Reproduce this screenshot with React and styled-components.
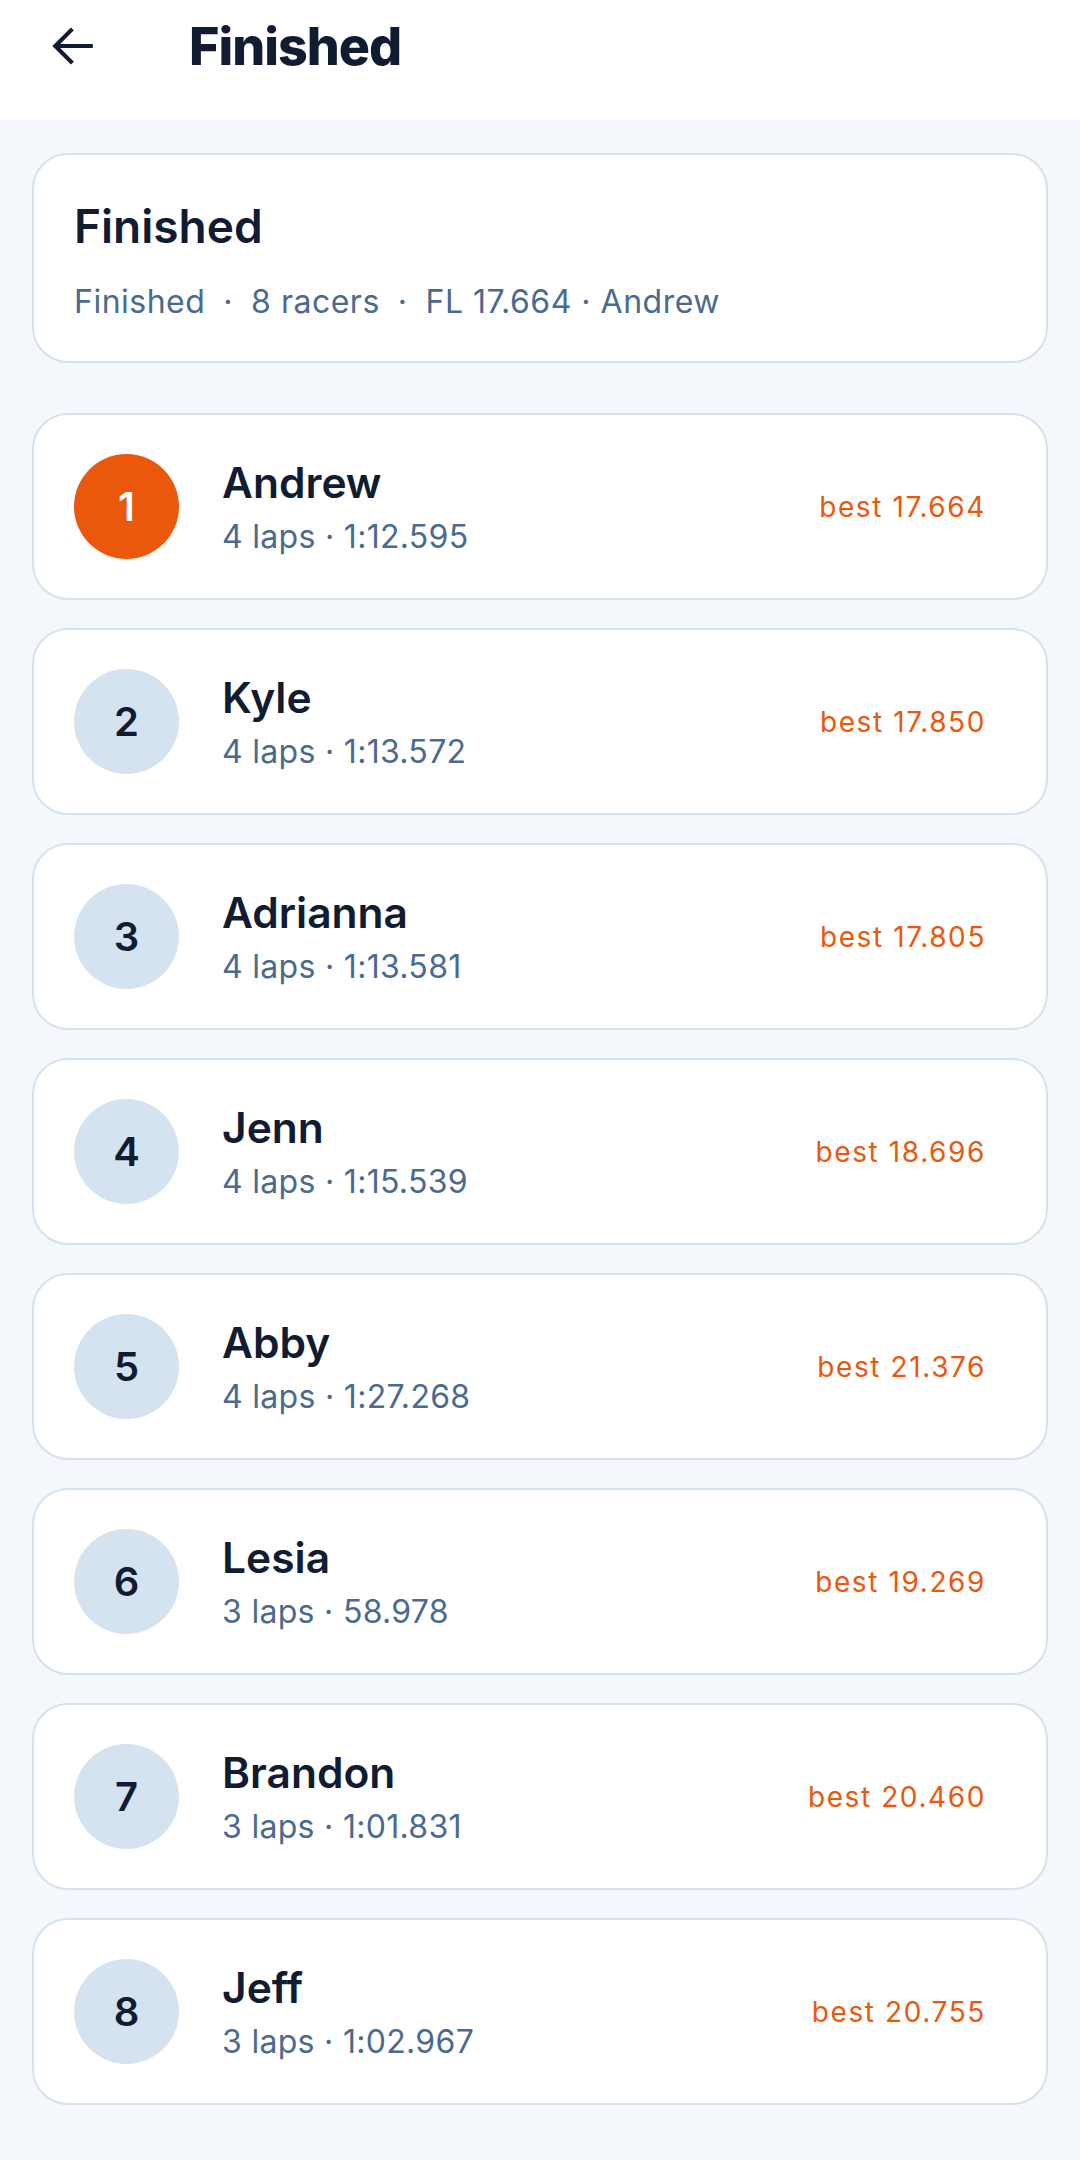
import React from "react";
import styled, { createGlobalStyle } from "styled-components";

const Global = createGlobalStyle`
  html, body { margin: 0; padding: 0; }
  body {
    background: #f4f7fc;
    font-family: Inter, "Noto Sans", "Liberation Sans", sans-serif;
    -webkit-font-smoothing: antialiased;
  }
  * { box-sizing: border-box; }
`;

const Page = styled.div`
  min-height: 2160px;
  background: #f4f7fc;
  display: flex;
  flex-direction: column;
`;

const Header = styled.header`
  height: 120px;
  background: #ffffff;
  display: flex;
  align-items: flex-start;
  padding: 10px 0 0 48px;
`;

const HeaderRow = styled.div`
  height: 72px;
  display: flex;
  align-items: center;
  gap: 91px;
`;

const BackButton = styled.button`
  width: 50px;
  height: 50px;
  padding: 0;
  border: none;
  background: transparent;
  display: flex;
  align-items: center;
  justify-content: center;
  color: #111c33;
  cursor: pointer;
`;

const HeaderTitle = styled.h1`
  margin: 0;
  font-size: 52px;
  font-weight: 800;
  letter-spacing: -1px;
  color: #111c33;
`;

const Content = styled.main`
  display: flex;
  flex-direction: column;
  padding: 33px 32px 0 32px;
`;

const Card = styled.section`
  background: #ffffff;
  border: 2px solid #d5e2ef;
  border-radius: 36px;
`;

const SummaryCard = styled(Card)`
  height: 210px;
  padding: 5px 40px 0;
  display: flex;
  flex-direction: column;
  justify-content: center;
  gap: 29px;
  margin-bottom: 50px;
`;

const SummaryTitle = styled.h2`
  margin: 0;
  font-size: 46px;
  font-weight: 600;
  color: #111c33;
  line-height: 1.2;
`;

const SummaryMeta = styled.div`
  display: flex;
  align-items: center;
  font-size: 32px;
  line-height: 1.2;
  color: #4a6a90;
  letter-spacing: 0.5px;
`;

const Sep = styled.span`
  margin: 0 18px;
`;

const List = styled.div`
  display: flex;
  flex-direction: column;
  gap: 28px;
`;

const RacerCard = styled(Card)`
  height: 187px;
  display: flex;
  align-items: center;
  padding: 0 60px 0 40px;
`;

const Position = styled.div`
  width: 105px;
  height: 105px;
  border-radius: 50%;
  flex-shrink: 0;
  display: flex;
  align-items: center;
  justify-content: center;
  font-size: 40px;
  font-weight: 600;
  background: ${(p) => (p.$leader ? "#ea580c" : "#d5e2ef")};
  color: ${(p) => (p.$leader ? "#ffffff" : "#111c33")};
`;

const Info = styled.div`
  flex: 1;
  display: flex;
  flex-direction: column;
  gap: 8px;
  margin-left: 43px;
  padding-top: 2px;
`;

const Name = styled.div`
  font-size: 42.5px;
  font-weight: 600;
  color: #111c33;
  line-height: 1.2;
`;

const Laps = styled.div`
  font-size: 32px;
  color: #4a6a90;
  line-height: 1.3;
  letter-spacing: 0.3px;
`;

const Best = styled.div`
  font-size: 28px;
  color: #ea580c;
  letter-spacing: 1.6px;
`;

const racers = [
  { name: "Andrew", laps: 4, time: "1:12.595", best: "17.664" },
  { name: "Kyle", laps: 4, time: "1:13.572", best: "17.850" },
  { name: "Adrianna", laps: 4, time: "1:13.581", best: "17.805" },
  { name: "Jenn", laps: 4, time: "1:15.539", best: "18.696" },
  { name: "Abby", laps: 4, time: "1:27.268", best: "21.376" },
  { name: "Lesia", laps: 3, time: "58.978", best: "19.269" },
  { name: "Brandon", laps: 3, time: "1:01.831", best: "20.460" },
  { name: "Jeff", laps: 3, time: "1:02.967", best: "20.755" },
];

export default function App() {
  return (
    <Page>
      <Global />
      <Header>
        <HeaderRow>
          <BackButton aria-label="Back">
            <svg width="50" height="50" viewBox="0 0 24 24" fill="none" stroke="currentColor" strokeWidth="2" strokeLinecap="square">
              <path d="M20.5 12H4" />
              <path d="M11 4.5L3.5 12L11 19.5" />
            </svg>
          </BackButton>
          <HeaderTitle>Finished</HeaderTitle>
        </HeaderRow>
      </Header>
      <Content>
        <SummaryCard>
          <SummaryTitle>Finished</SummaryTitle>
          <SummaryMeta>
            <span>Finished</span>
            <Sep>·</Sep>
            <span>8 racers</span>
            <Sep>·</Sep>
            <span>FL 17.664 · Andrew</span>
          </SummaryMeta>
        </SummaryCard>
        <List>
          {racers.map((r, i) => (
            <RacerCard key={r.name}>
              <Position $leader={i === 0}>{i + 1}</Position>
              <Info>
                <Name>{r.name}</Name>
                <Laps>
                  {r.laps} laps · {r.time}
                </Laps>
              </Info>
              <Best>best {r.best}</Best>
            </RacerCard>
          ))}
        </List>
      </Content>
    </Page>
  );
}
